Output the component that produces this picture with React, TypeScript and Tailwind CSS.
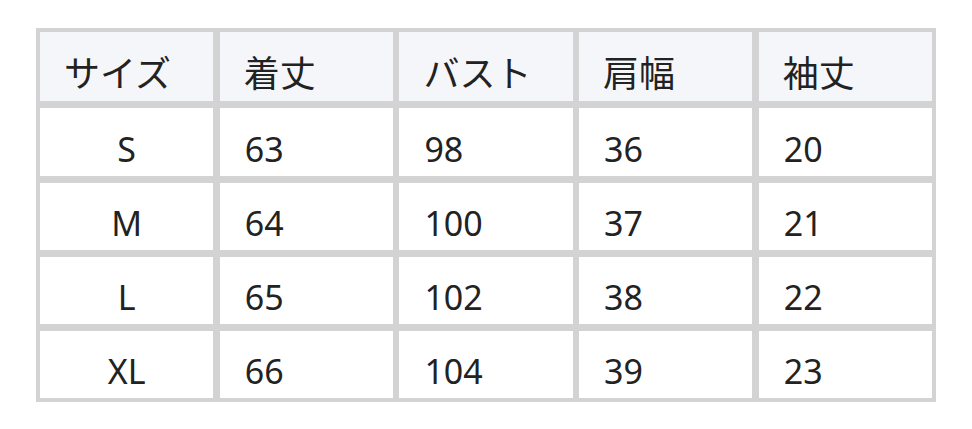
const headers = ["サイズ", "着丈", "バスト", "肩幅", "袖丈"]

const rows = [
  ["S", "63", "98", "36", "20"],
  ["M", "64", "100", "37", "21"],
  ["L", "65", "102", "38", "22"],
  ["XL", "66", "104", "39", "23"],
]

export default function App() {
  return (
    <div
      className="min-h-screen bg-white pt-[28px] pl-[36px] text-[#222222]"
      style={{ fontFamily: '"Noto Sans", "Noto Sans CJK JP", sans-serif' }}
    >
      <div className="grid w-[900px] grid-cols-5 grid-rows-[69px_68px_67px_67px_67px] gap-x-[6.5px] gap-y-[7px] border-[4px] border-[#d3d3d3] bg-[#d3d3d3]">
        {headers.map((h) => (
          <div key={h} className="flex items-center bg-[#f5f6fa] pl-[24px] pt-[15px] text-[36px] leading-none">
            {h}
          </div>
        ))}
        {rows.map((row) =>
          row.map((cell, i) => (
            <div
              key={row[0] + i}
              className={`flex items-center bg-white pt-[13px] text-[34px] leading-none ${
                i === 0 ? "justify-center" : "pl-[25px]"
              }`}
            >
              {cell}
            </div>
          ))
        )}
      </div>
    </div>
  )
}
